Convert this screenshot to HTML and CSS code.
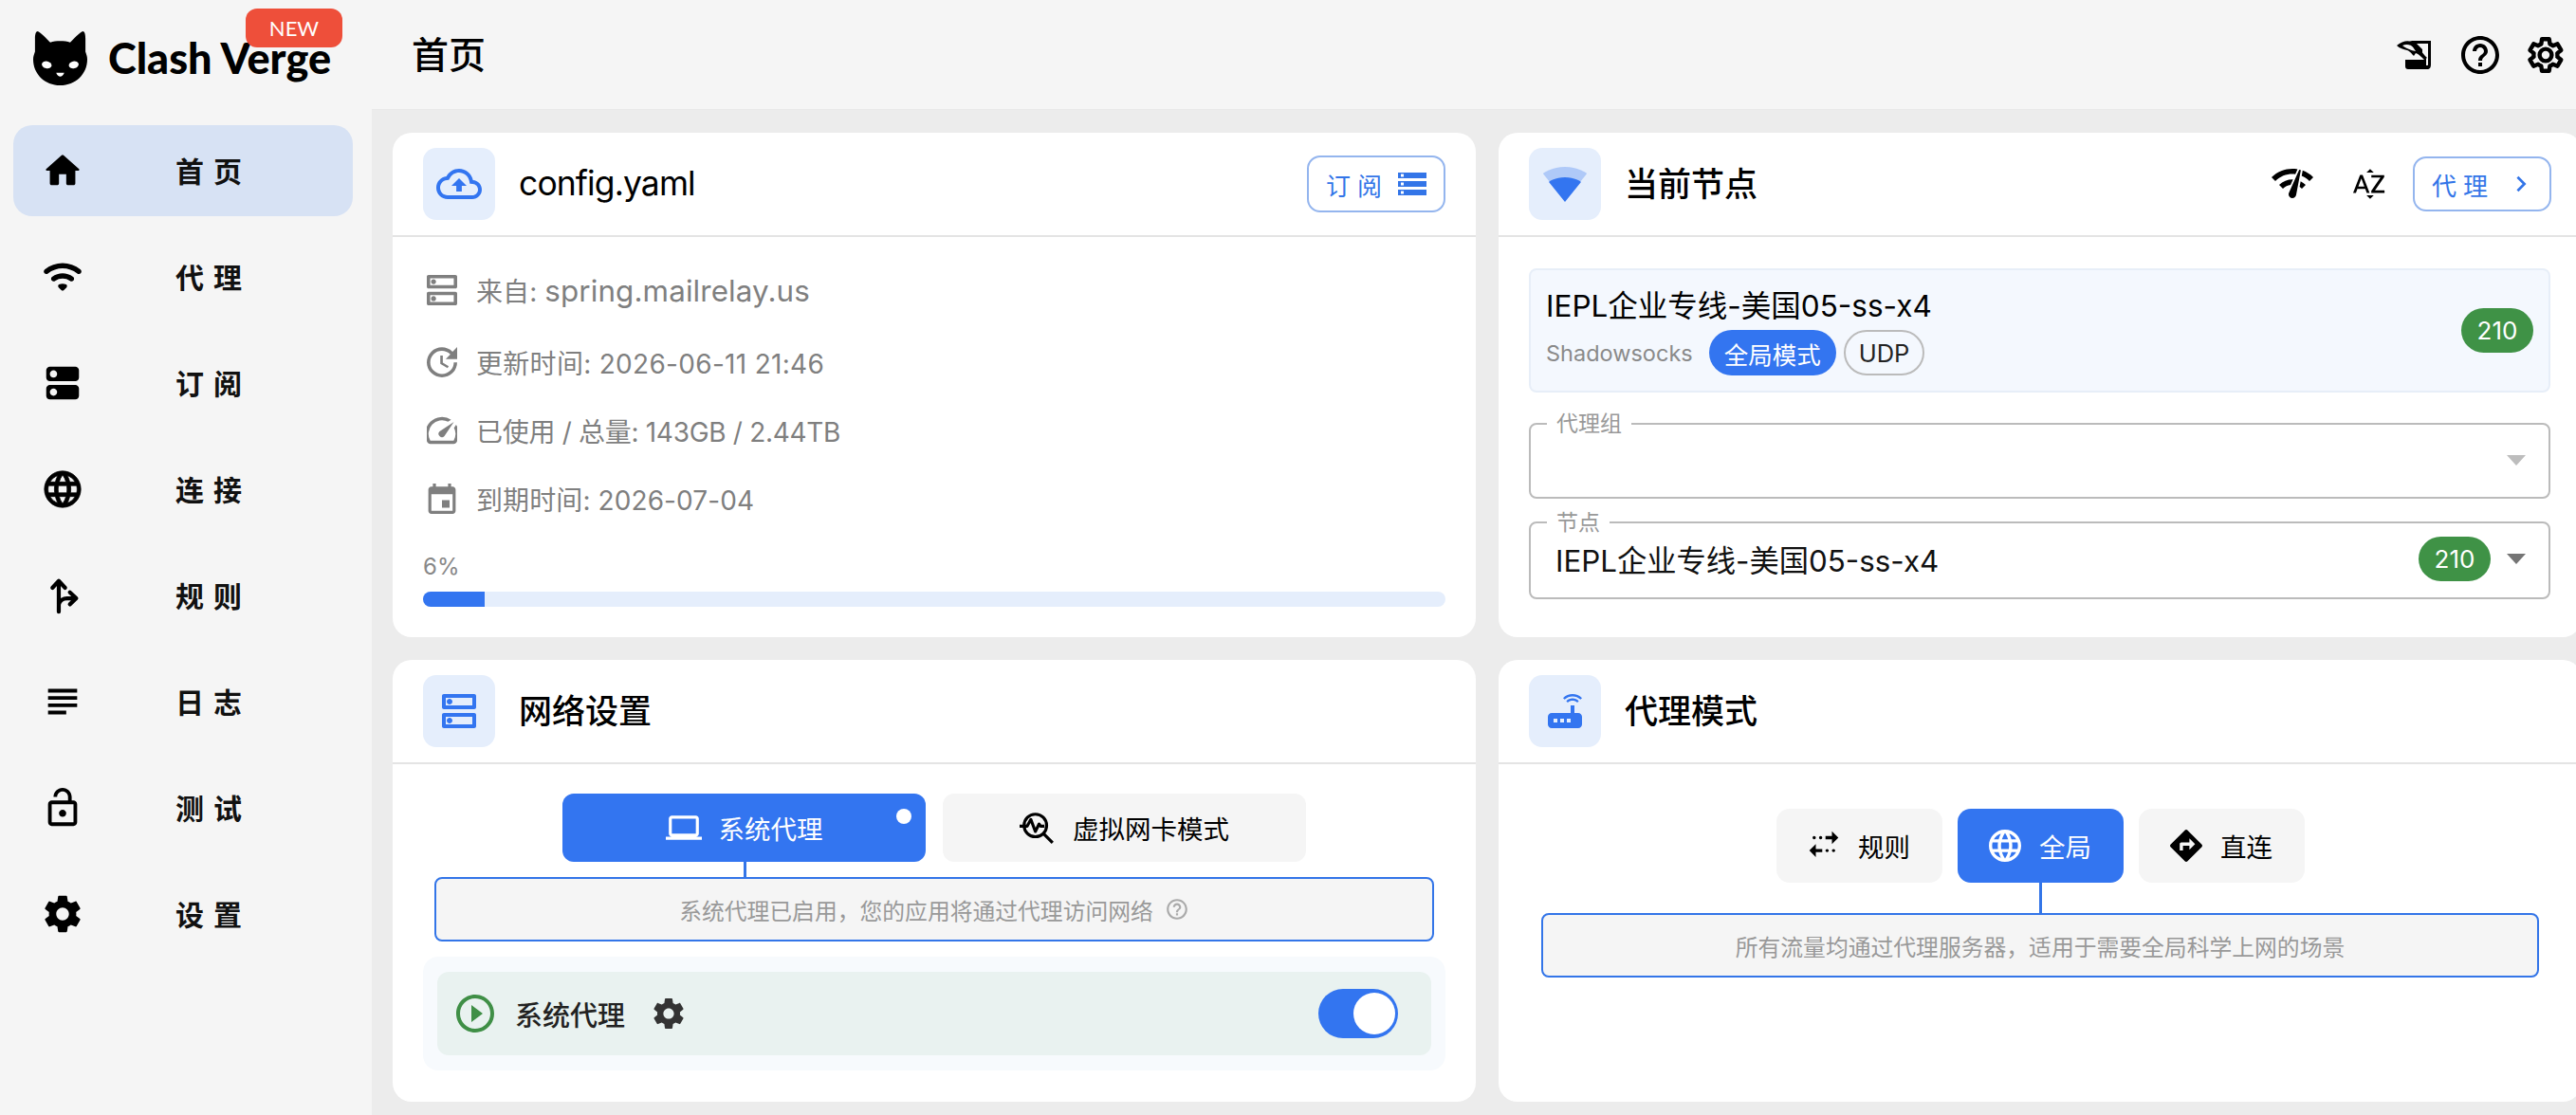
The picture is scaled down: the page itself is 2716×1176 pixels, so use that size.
FILE: index.html
```html
<!DOCTYPE html>
<html lang="zh-CN">
<head>
  <meta charset="UTF-8">
  <title>Clash Verge</title>
  <link rel="stylesheet" href="styles.css">
</head>
<body>

<aside class="sidebar">
  <div class="logo">
    <svg class="logo-cat" viewBox="0 0 60 58" preserveAspectRatio="none">
      <path d="M5 0c2 0 11 9 14 12 3-1 7-1.500 11-1.500s8 .5 11 1.500c3-3 12-12 14-12 2 0 3 3 3 8v14c1 3 2 5 2 8 0 16-13 28-30 28S0 46 0 30c0-3 1-5 2-8V8c0-5 1-8 3-8z" fill="#000"/>
      <ellipse cx="15" cy="36" rx="5.500" ry="3.800" transform="rotate(12 15 36)" fill="#fff"/>
      <ellipse cx="45" cy="36" rx="5.500" ry="3.800" transform="rotate(-12 45 36)" fill="#fff"/>
      <path d="M25.500 44.500h9c-1 2.500-3 4-4.500 4s-3.500-1.500-4.500-4z" fill="#fff"/>
    </svg>
    <span class="logo-text">Clash Verge</span>
    <span class="logo-new">NEW</span>
  </div>

  <nav class="menu">
    <a class="menu-item active">
      <svg viewBox="0 0 24 24"><path d="M10 19v-5h4v5c0 .55.45 1 1 1h3c.55 0 1-.45 1-1v-7h1.700c.46 0 .68-.57.33-.87L12.670 3.600c-.38-.34-.96-.34-1.340 0l-8.360 7.530c-.34.3-.13.87.33.87H5v7c0 .55.45 1 1 1h3c.55 0 1-.45 1-1z"/></svg>
      <span>首页</span>
    </a>
    <a class="menu-item">
      <svg viewBox="0 0 24 24"><path d="M2.060 10.060c.51.51 1.320.56 1.870.1 4.670-3.840 11.450-3.840 16.130-.01.56.46 1.380.42 1.890-.09.59-.59.55-1.570-.1-2.100-5.710-4.670-13.970-4.670-19.690 0-.65.52-.7 1.500-.1 2.100zm7.760 7.760l1.470 1.470c.39.39 1.020.39 1.410 0l1.470-1.470c.47-.47.37-1.280-.23-1.590-1.220-.63-2.680-.63-3.910 0-.57.31-.68 1.120-.21 1.590zm-3.730-3.730c.49.49 1.260.54 1.830.13 2.440-1.730 5.720-1.730 8.160 0 .57.4 1.340.36 1.830-.13l.01-.01c.6-.6.56-1.620-.13-2.110-3.440-2.490-8.130-2.490-11.580 0-.69.5-.73 1.510-.12 2.120z"/></svg>
      <span>代理</span>
    </a>
    <a class="menu-item">
      <svg viewBox="0 0 24 24"><path d="M19 13H5c-1.100 0-2 .9-2 2v4c0 1.100.9 2 2 2h14c1.100 0 2-.9 2-2v-4c0-1.100-.9-2-2-2zM7 19c-1.100 0-2-.9-2-2s.9-2 2-2 2 .9 2 2-.9 2-2 2zM19 3H5c-1.100 0-2 .9-2 2v4c0 1.100.9 2 2 2h14c1.100 0 2-.9 2-2V5c0-1.100-.9-2-2-2zM7 9c-1.100 0-2-.9-2-2s.9-2 2-2 2 .9 2 2-.9 2-2 2z"/></svg>
      <span>订阅</span>
    </a>
    <a class="menu-item">
      <svg viewBox="0 0 24 24"><path d="M11.990 2C6.470 2 2 6.480 2 12s4.470 10 9.990 10C17.520 22 22 17.520 22 12S17.520 2 11.990 2zm6.930 6h-2.950c-.32-1.250-.78-2.450-1.380-3.560 1.840.63 3.370 1.910 4.330 3.560zM12 4.040c.83 1.200 1.480 2.530 1.910 3.960h-3.820c.43-1.430 1.080-2.760 1.910-3.960zM4.260 14C4.100 13.360 4 12.690 4 12s.1-1.360.26-2h3.380c-.08.66-.14 1.320-.14 2 0 .68.06 1.340.14 2H4.260zm.82 2h2.950c.32 1.250.78 2.450 1.380 3.560-1.840-.63-3.370-1.900-4.330-3.560zm2.950-8H5.080c.96-1.660 2.490-2.930 4.330-3.560C8.810 5.550 8.350 6.750 8.030 8zM12 19.960c-.83-1.200-1.480-2.530-1.910-3.960h3.820c-.43 1.430-1.080 2.760-1.910 3.960zM14.340 14H9.660c-.09-.66-.16-1.320-.16-2 0-.68.07-1.350.16-2h4.680c.09.65.16 1.320.16 2 0 .68-.07 1.340-.16 2zm.25 5.560c.6-1.110 1.060-2.310 1.380-3.560h2.950c-.96 1.650-2.490 2.930-4.330 3.560zM16.360 14c.08-.66.14-1.320.14-2 0-.68-.06-1.340-.14-2h3.380c.16.64.26 1.310.26 2s-.1 1.360-.26 2h-3.380z" stroke="#000" stroke-width=".4"/></svg>
      <span>连接</span>
    </a>
    <a class="menu-item">
      <svg viewBox="0 0 24 24"><path class="line" d="M9.900 21V4.500M6.400 7.800 9.900 4l3.500 3.800M9.900 17c.5-2.200 2.500-3.400 4.500-3.400h4.400M16 10.300l3.500 3.300-3.500 3.300"/></svg>
      <span>规则</span>
    </a>
    <a class="menu-item">
      <svg viewBox="0 0 24 24"><path d="M4 5h16v2H4zM4 9h16v2H4zM4 13h16v2H4zM4 17h10v2H4z"/></svg>
      <span>日志</span>
    </a>
    <a class="menu-item">
      <svg viewBox="0 0 24 24"><path d="M12 17c1.100 0 2-.9 2-2s-.9-2-2-2-2 .9-2 2 .9 2 2 2zm6-9h-1V6c0-2.760-2.240-5-5-5S7 3.240 7 6h2c0-1.660 1.340-3 3-3s3 1.340 3 3v2H6c-1.100 0-2 .9-2 2v10c0 1.100.9 2 2 2h12c1.100 0 2-.9 2-2V10c0-1.100-.9-2-2-2zm0 12H6V10h12v10z"/></svg>
      <span>测试</span>
    </a>
    <a class="menu-item">
      <svg viewBox="0 0 24 24"><path d="M19.430 12.980c.04-.32.07-.64.07-.98s-.03-.66-.07-.98l2.110-1.650c.19-.15.24-.42.12-.64l-2-3.460c-.12-.22-.39-.3-.61-.22l-2.490 1c-.52-.4-1.080-.73-1.690-.98l-.38-2.650C14.460 2.180 14.250 2 14 2h-4c-.25 0-.46.18-.49.42l-.38 2.650c-.61.25-1.170.59-1.690.98l-2.490-1c-.23-.09-.49 0-.61.22l-2 3.460c-.13.22-.07.49.12.64l2.110 1.650c-.04.32-.07.65-.07.98s.03.66.07.98l-2.110 1.650c-.19.15-.24.42-.12.64l2 3.460c.12.22.39.3.61.22l2.490-1c.52.4 1.080.73 1.690.98l.38 2.650c.03.24.24.42.49.42h4c.25 0 .46-.18.49-.42l.38-2.650c.61-.25 1.170-.59 1.690-.98l2.490 1c.23.09.49 0 .61-.22l2-3.460c.12-.22.07-.49-.12-.64l-2.110-1.650zM12 15.500c-1.930 0-3.500-1.570-3.500-3.500s1.570-3.500 3.500-3.500 3.500 1.570 3.500 3.500-1.570 3.500-3.500 3.500z"/></svg>
      <span>设置</span>
    </a>
  </nav>
</aside>

<main class="main">
  <header class="topbar">
    <h1>首页</h1>
    <div class="topbar-actions">
      <svg class="top-tun" viewBox="0 0 40 34">
        <path d="M17 2h20v25c0 3-1 5-4 5H13c-2 0-3-1-3-3v-7h20v-5L14 3z" fill="#000"/>
        <path d="M22 5h12v22c0 1-.5 1-1 1h-1v-7l-4-1v-9z" fill="#f5f5f5"/>
        <path d="M1 7c5-4 11-6 15-4 5 2 11 11 17 17l-3 2c-3-3-6-6-9-7l-2 3c-3-3-4-5-7-6-4-1-8-2-11-5z" fill="#000"/>
        <path d="M7 7c3-1.500 6-1.500 9 0 2 1 3 3 5 6-5-1-10-3-14-6z" fill="#f5f5f5"/>
      </svg>
      <svg class="top-icon" viewBox="2 2 20 20"><path d="M11 18h2v-2h-2v2zm1-16C6.480 2 2 6.480 2 12s4.480 10 10 10 10-4.480 10-10S17.520 2 12 2zm0 18c-4.410 0-8-3.590-8-8s3.590-8 8-8 8 3.590 8 8-3.590 8-8 8zm0-14c-2.210 0-4 1.790-4 4h2c0-1.100.9-2 2-2s2 .9 2 2c0 2-3 1.750-3 5h2c0-2.250 3-2.500 3-5 0-2.210-1.790-4-4-4z"/></svg>
      <svg class="top-icon" viewBox="2 2 20 20"><path class="line-thin gear" d="M18.140 12.940c.04-.3.06-.61.06-.94 0-.32-.02-.64-.07-.94l2.030-1.580-1.920-3.320-2.390.96c-.5-.38-1.030-.7-1.620-.94l-.36-2.540h-3.840l-.36 2.540c-.59.24-1.130.57-1.620.94l-2.390-.96-1.920 3.320 2.030 1.580c-.05.3-.09.63-.09.94s.02.64.07.94l-2.030 1.580 1.920 3.320 2.390-.96c.5.38 1.030.7 1.620.94l.36 2.540h3.840l.36-2.540c.59-.24 1.130-.56 1.620-.94l2.390.96 1.920-3.320-2.010-1.580zM12 15.200a3.200 3.200 0 1 1 0-6.400 3.200 3.200 0 0 1 0 6.400z"/></svg>
    </div>
  </header>

  <div class="grid">
    <section class="card card-top">
      <div class="card-head">
        <span class="head-icon">
          <svg viewBox="0 0 24 24"><path d="M19.350 10.040C18.670 6.590 15.640 4 12 4 9.110 4 6.600 5.640 5.350 8.040 2.340 8.360 0 10.910 0 14c0 3.310 2.690 6 6 6h13c2.760 0 5-2.240 5-5 0-2.640-2.050-4.780-4.650-4.960zM19 18H6c-2.210 0-4-1.790-4-4 0-2.050 1.530-3.760 3.560-3.970l1.070-.11.5-.95C8.080 7.140 9.940 6 12 6c2.620 0 4.880 1.860 5.390 4.430l.3 1.500 1.530.11c1.560.1 2.780 1.410 2.780 2.960 0 1.650-1.350 3-3 3zM8 13h2.550v3h2.900v-3H16l-4-4z"/></svg>
        </span>
        <h2>config.yaml</h2>
        <div class="head-actions">
          <button class="outline-btn">订阅
            <svg viewBox="2 4 20 16" class="btn-storage"><path d="M2 20h20v-4H2v4zm2-3h2v2H4v-2zM2 4v4h20V4H2zm4 3H4V5h2v2zm-4 7h20v-4H2v4zm2-3h2v2H4v-2z"/></svg>
          </button>
        </div>
      </div>
      <div class="profile-body">
        <div class="info-row first">
          <svg viewBox="3 3 18 18"><path d="M20 13H4c-.55 0-1 .45-1 1v6c0 .55.45 1 1 1h16c.55 0 1-.45 1-1v-6c0-.55-.45-1-1-1zm-1 6H5v-4h14v4zm-12-.5c.83 0 1.500-.67 1.500-1.500S7.830 15.500 7 15.500s-1.500.67-1.500 1.500.67 1.500 1.500 1.500zM20 3H4c-.55 0-1 .45-1 1v6c0 .55.45 1 1 1h16c.55 0 1-.45 1-1V4c0-.55-.45-1-1-1zm-1 6H5V5h14v4zM7 8.500c.83 0 1.500-.67 1.500-1.500S7.830 5.500 7 5.500 5.500 6.170 5.500 7 6.170 8.500 7 8.500z"/></svg>
          <span>来自: <span class="info-big">spring.mailrelay.us</span></span>
        </div>
        <div class="info-row">
          <svg viewBox="3 3 18 18"><path d="M21 10.120h-6.780l2.740-2.820c-2.730-2.700-7.150-2.800-9.880-.1-2.730 2.710-2.730 7.080 0 9.790s7.150 2.710 9.880 0C18.320 15.650 19 14.080 19 12.100h2c0 1.980-.88 4.550-2.640 6.290-3.510 3.480-9.210 3.480-12.720 0-3.500-3.470-3.530-9.110-.02-12.580s9.140-3.470 12.650 0L21 3v7.120zM12.500 8v4.250l3.500 2.080-.72 1.210L11 13V8h1.500z"/></svg>
          <span class="info-wide">更新时间: 2026-06-11 21:46</span>
        </div>
        <div class="info-row">
          <svg viewBox="3 3 18 18"><path d="M20.380 8.570l-1.230 1.850a8 8 0 0 1-.22 7.580H5.070A8 8 0 0 1 15.580 6.850l1.850-1.230A10 10 0 0 0 3.350 19a2 2 0 0 0 1.720 1h13.850a2 2 0 0 0 1.740-1 10 10 0 0 0-.27-10.440zm-9.790 6.840a2 2 0 0 0 2.830 0l5.660-8.490-8.490 5.660a2 2 0 0 0 0 2.830z"/></svg>
          <span class="info-tight">已使用 / 总量: 143GB / 2.44TB</span>
        </div>
        <div class="info-row">
          <svg viewBox="3 1 18 20"><path d="M17 12h-5v5h5v-5zM16 1v2H8V1H6v2H5c-1.110 0-1.990.9-1.990 2L3 19c0 1.100.89 2 2 2h14c1.100 0 2-.9 2-2V5c0-1.100-.9-2-2-2h-1V1h-2zm3 18H5V8h14v11z"/></svg>
          <span>到期时间: 2026-07-04</span>
        </div>
        <div class="usage-label">6%</div>
        <div class="usage-bar"><div class="usage-fill" style="width: 6%"></div></div>
      </div>
    </section>

    <section class="card card-top">
      <div class="card-head">
        <span class="head-icon">
          <svg viewBox="0 0 24 24"><path d="M12 21 23.600 6.500C23.150 6.150 18.600 3 12 3S.85 6.150.4 6.500z" opacity=".3"/><path d="M3.530 10.950 12 21.500l8.470-10.550C20.040 10.620 17.300 8.500 12 8.500s-8.040 2.120-8.470 2.450z"/></svg>
        </span>
        <h2 class="title-cjk">当前节点</h2>
        <div class="head-actions">
          <svg class="act-check" viewBox="1 4 22 17"><path d="M15.900 5c-.17 0-.32.09-.41.23l-.07.15-5.180 11.650c-.16.29-.26.61-.26.96 0 1.110.9 2.010 2.010 2.010.96 0 1.770-.68 1.960-1.590l.01-.03L16.400 5.500c0-.28-.22-.5-.5-.5zM1 9l2 2c2.880-2.880 6.790-4.080 10.530-3.620l1.190-2.680C9.890 3.840 4.740 5.270 1 9zm20 2 2-2c-1.640-1.640-3.550-2.820-5.590-3.570l-.53 2.820c1.500.62 2.900 1.530 4.120 2.750zm-4 4 2-2c-.8-.8-1.700-1.420-2.660-1.890l-.55 2.920c.42.27.83.59 1.210.97zM5 13l2 2c1.130-1.130 2.560-1.790 4.030-2l1.280-2.880c-2.630-.08-5.300.87-7.310 2.880z"/></svg>
          <svg class="act-sort" viewBox="1 2 22 20"><path d="M14.940 4.660h-4.720l2.360-2.360zm-4.690 14.710h4.660l-2.330 2.330zM6.100 6.270 1.600 17.730h1.840l.92-2.450h5.110l.92 2.450h1.840L7.740 6.270H6.100zm-1.130 7.370 1.940-5.180 1.940 5.180H4.970zm10.760 2.500h6.120v1.590h-8.530v-1.290l5.920-8.560h-5.880v-1.600h8.300v1.260l-5.930 8.600z"/></svg>
          <button class="outline-btn proxy-btn">代理
            <svg class="btn-chevron" viewBox="0 0 12 20"><path d="M2 2l8 8-8 8"/></svg>
          </button>
        </div>
      </div>
      <div class="node-body">
        <div class="node-card">
          <div class="node-info">
            <div class="node-name">IEPL企业专线-美国05-ss-x4</div>
            <div class="node-meta">
              <span class="node-type">Shadowsocks</span>
              <span class="pill pill-blue">全局模式</span>
              <span class="pill pill-line">UDP</span>
            </div>
          </div>
          <span class="delay">210</span>
        </div>
        <fieldset class="select select-empty">
          <legend>代理组</legend>
          <div class="select-row">
            <span class="select-value"></span>
            <span class="select-arrow off"></span>
          </div>
        </fieldset>
        <fieldset class="select select-node">
          <legend>节点</legend>
          <div class="select-row">
            <span class="select-value">IEPL企业专线-美国05-ss-x4</span>
            <span class="delay">210</span>
            <span class="select-arrow"></span>
          </div>
        </fieldset>
      </div>
    </section>

    <section class="card card-bottom">
      <div class="card-head">
        <span class="head-icon">
          <svg viewBox="3 3 18 18" class="head-dns"><path d="M20 13H4c-.55 0-1 .45-1 1v6c0 .55.45 1 1 1h16c.55 0 1-.45 1-1v-6c0-.55-.45-1-1-1zm-1 6H5v-4h14v4zm-12-.5c.83 0 1.500-.67 1.500-1.500S7.830 15.500 7 15.500s-1.500.67-1.500 1.500.67 1.500 1.500 1.500zM20 3H4c-.55 0-1 .45-1 1v6c0 .55.45 1 1 1h16c.55 0 1-.45 1-1V4c0-.55-.45-1-1-1zm-1 6H5V5h14v4zM7 8.500c.83 0 1.500-.67 1.500-1.500S7.830 5.500 7 5.500 5.500 6.170 5.500 7 6.170 8.500 7 8.500z"/></svg>
        </span>
        <h2 class="title-cjk">网络设置</h2>
      </div>
      <div class="net-body">
        <div class="tabs">
          <div class="tab active">
            <svg viewBox="0 0 24 24"><path d="M20 18c1.100 0 1.990-.9 1.990-2L22 6c0-1.100-.9-2-2-2H4c-1.100 0-2 .9-2 2v10c0 1.100.9 2 2 2H0v2h24v-2h-4zM4 6h16v10H4V6z"/></svg>
            系统代理
            <span class="tab-dot"></span>
          </div>
          <div class="tab">
            <svg viewBox="0 0 24 24"><circle class="line-thin" cx="10.500" cy="10.500" r="7.500"/><path class="line-thin" d="m16 16 6 6M0 11h5l2.500-4.500 3 8 2.500-5 1 1.500h2.500"/></svg>
            虚拟网卡模式
          </div>
        </div>
        <div class="desc-box net-desc">系统代理已启用，您的应用将通过代理访问网络
          <svg viewBox="0 0 24 24" class="desc-help"><path d="M11 18h2v-2h-2v2zm1-16C6.480 2 2 6.480 2 12s4.480 10 10 10 10-4.480 10-10S17.520 2 12 2zm0 18c-4.410 0-8-3.590-8-8s3.590-8 8-8 8 3.590 8 8-3.590 8-8 8zm0-14c-2.210 0-4 1.790-4 4h2c0-1.100.9-2 2-2s2 .9 2 2c0 2-3 1.750-3 5h2c0-2.250 3-2.500 3-5 0-2.210-1.790-4-4-4z"/></svg>
        </div>
        <div class="switch-wrap">
          <div class="switch-row">
            <svg class="sw-play" viewBox="2 2 20 20"><path d="M10 16.500l6-4.500-6-4.500v9zM12 2C6.480 2 2 6.480 2 12s4.480 10 10 10 10-4.480 10-10S17.520 2 12 2zm0 18c-4.410 0-8-3.590-8-8s3.590-8 8-8 8 3.590 8 8-3.590 8-8 8z"/></svg>
            <span class="sw-label">系统代理</span>
            <svg class="sw-gear" viewBox="2 2 20 20"><path d="M19.430 12.980c.04-.32.07-.64.07-.98s-.03-.66-.07-.98l2.110-1.650c.19-.15.24-.42.12-.64l-2-3.460c-.12-.22-.39-.3-.61-.22l-2.490 1c-.52-.4-1.080-.73-1.690-.98l-.38-2.650C14.460 2.180 14.250 2 14 2h-4c-.25 0-.46.18-.49.42l-.38 2.650c-.61.25-1.170.59-1.690.98l-2.490-1c-.23-.09-.49 0-.61.22l-2 3.460c-.13.22-.07.49.12.64l2.110 1.650c-.04.32-.07.65-.07.98s.03.66.07.98l-2.110 1.650c-.19.15-.24.42-.12.64l2 3.460c.12.22.39.3.61.22l2.490-1c.52.4 1.080.73 1.690.98l.38 2.650c.03.24.24.42.49.42h4c.25 0 .46-.18.49-.42l.38-2.650c.61-.25 1.170-.59 1.690-.98l2.490 1c.23.09.49 0 .61-.22l2-3.460c.12-.22.07-.49-.12-.64l-2.110-1.650zM12 15.500c-1.930 0-3.500-1.570-3.500-3.500s1.570-3.500 3.500-3.500 3.500 1.570 3.500 3.500-1.570 3.500-3.500 3.500z"/></svg>
            <span class="toggle"><span class="toggle-thumb"></span></span>
          </div>
        </div>
      </div>
    </section>

    <section class="card card-bottom">
      <div class="card-head">
        <span class="head-icon">
          <svg viewBox="0 0 24 24"><path d="M20.200 5.900l.8-.8C19.600 3.700 17.800 3 16 3s-3.600.7-5 2.100l.8.8C13 4.800 14.500 4.200 16 4.200s3 .6 4.200 1.700zm-.9.8c-.9-.9-2.100-1.400-3.300-1.400s-2.400.5-3.300 1.400l.8.8c.7-.7 1.600-1 2.500-1 .9 0 1.800.3 2.500 1l.8-.8zM19 13h-2V9h-2v4H5c-1.100 0-2 .9-2 2v4c0 1.100.9 2 2 2h14c1.100 0 2-.9 2-2v-4c0-1.100-.9-2-2-2zM8 18H6v-2h2v2zm3.500 0h-2v-2h2v2zm3.500 0h-2v-2h2v2z"/></svg>
        </span>
        <h2 class="title-cjk">代理模式</h2>
      </div>
      <div class="mode-body">
        <div class="modes">
          <div class="mode">
            <svg viewBox="2 3 20 20"><path d="M17 4l4 4-4 4V9h-4V7h4V4zm-7 3c-.55 0-1 .45-1 1s.45 1 1 1 1-.45 1-1-.45-1-1-1zM6 7c-.55 0-1 .45-1 1s.45 1 1 1 1-.45 1-1-.45-1-1-1zm1 10h4v-2H7v-3l-4 4 4 4v-3zm7 0c.55 0 1-.45 1-1s-.45-1-1-1-1 .45-1 1 .45 1 1 1zm4 0c.55 0 1-.45 1-1s-.45-1-1-1-1 .45-1 1 .45 1 1 1z"/></svg>
            规则
          </div>
          <div class="mode active">
            <svg viewBox="2 2 20 20"><path d="M11.990 2C6.470 2 2 6.480 2 12s4.470 10 9.990 10C17.520 22 22 17.520 22 12S17.520 2 11.990 2zm6.930 6h-2.950c-.32-1.250-.78-2.450-1.380-3.560 1.840.63 3.370 1.910 4.330 3.560zM12 4.040c.83 1.200 1.480 2.530 1.910 3.960h-3.820c.43-1.430 1.080-2.760 1.910-3.960zM4.260 14C4.100 13.360 4 12.690 4 12s.1-1.360.26-2h3.380c-.08.66-.14 1.320-.14 2 0 .68.06 1.340.14 2H4.260zm.82 2h2.950c.32 1.250.78 2.450 1.380 3.560-1.840-.63-3.370-1.900-4.330-3.560zm2.950-8H5.080c.96-1.660 2.490-2.930 4.330-3.560C8.810 5.550 8.350 6.750 8.030 8zM12 19.960c-.83-1.200-1.480-2.530-1.910-3.960h3.820c-.43 1.430-1.080 2.760-1.910 3.960zM14.340 14H9.660c-.09-.66-.16-1.320-.16-2 0-.68.07-1.350.16-2h4.680c.09.65.16 1.320.16 2 0 .68-.07 1.340-.16 2zm.25 5.560c.6-1.110 1.060-2.310 1.380-3.560h2.950c-.96 1.650-2.490 2.930-4.330 3.560zM16.360 14c.08-.66.14-1.320.14-2 0-.68-.06-1.340-.14-2h3.380c.16.64.26 1.310.26 2s-.1 1.360-.26 2h-3.380z"/></svg>
            全局
          </div>
          <div class="mode">
            <svg viewBox="2 2 20 20"><path d="M21.710 11.290l-9-9c-.39-.39-1.020-.39-1.410 0l-9 9c-.39.39-.39 1.020 0 1.410l9 9c.39.39 1.020.39 1.410 0l9-9c.39-.38.39-1.010 0-1.410zM14 14.500V12h-4v3H8v-4c0-.55.45-1 1-1h5V7.500l3.500 3.500-3.500 3.500z"/></svg>
            直连
          </div>
        </div>
        <div class="desc-box mode-desc">所有流量均通过代理服务器，适用于需要全局科学上网的场景</div>
      </div>
    </section>
  </div>
</main>

</body>
</html>
```

FILE: styles.css
```css
* {
  box-sizing: border-box;
}

html, body {
  height: 100%;
}

body {
  margin: 0;
  display: flex;
  overflow: hidden;
  background-color: #ececec;
  color: #000;
  font-family: "Inter", "Noto Sans CJK SC", sans-serif;
}

svg {
  display: block;
  flex-shrink: 0;
  fill: currentColor;
}

.line {
  fill: none;
  stroke: currentColor;
  stroke-width: 2.2;
  stroke-linecap: round;
  stroke-linejoin: round;
}

.line-thin {
  fill: none;
  stroke: currentColor;
  stroke-width: 2;
  stroke-linejoin: round;
}

.gear {
  stroke-width: 2.2;
}

/* sidebar */
.sidebar {
  width: 392px;
  flex-shrink: 0;
  background-color: #f5f5f5;
}

.logo {
  position: relative;
  height: 132px;
  display: flex;
  align-items: flex-start;
  padding: 33px 0 0 35px;
}

.logo-cat {
  width: 57px;
  height: 57px;
}

.logo-text {
  margin: 1px 0 0 22px;
  font-family: "Lato", sans-serif;
  font-size: 45px;
  font-weight: 900;
  line-height: 54px;
  white-space: nowrap;
}

.logo-new {
  position: absolute;
  left: 259px;
  top: 9px;
  width: 102px;
  height: 41px;
  border-radius: 12px;
  background-color: #ee4f3a;
  color: #fff;
  font-family: "Lato", sans-serif;
  font-size: 22px;
  line-height: 41px;
  text-align: center;
}

.menu {
  padding: 0 20px 0 14px;
}

.menu-item {
  display: flex;
  align-items: center;
  height: 96px;
  margin-bottom: 16px;
  padding-left: 29px;
  border-radius: 20px;
  font-size: 30px;
  font-weight: 700;
  color: #111;
}

.menu-item.active {
  background-color: #d7e2f4;
}

.menu-item svg {
  width: 46px;
  height: 46px;
  margin-right: 96px;
  color: #000;
}

.menu-item span {
  margin-bottom: 2px;
  letter-spacing: 10px;
}

/* top bar */
.main {
  flex: 1;
  min-width: 0;
}

.topbar {
  height: 116px;
  display: flex;
  align-items: center;
  justify-content: space-between;
  padding: 0 12px 0 42px;
  background-color: #f5f5f5;
  border-bottom: 1px solid #e8e8e8;
}

.topbar h1 {
  margin: 0 0 5px;
  font-size: 39px;
  font-weight: 500;
}

.topbar-actions {
  display: flex;
  align-items: center;
}

.top-tun {
  width: 40px;
  height: 34px;
  margin-right: 29px;
}

.top-icon {
  width: 40px;
  height: 40px;
  margin-left: 29px;
}

.top-tun + .top-icon {
  margin-left: 0;
}

/* cards */
.grid {
  display: grid;
  grid-template-columns: 1142px 1142px;
  grid-template-rows: 532px 466px;
  gap: 24px;
  padding: 24px 0 0 22px;
}

.card {
  background-color: #fff;
  border-radius: 20px;
  overflow: hidden;
}

.card-head {
  display: flex;
  align-items: center;
  height: 110px;
  padding: 0 32px;
  border-bottom: 2px solid #e4e4e4;
}

.head-icon {
  width: 76px;
  height: 76px;
  display: flex;
  align-items: center;
  justify-content: center;
  flex-shrink: 0;
  margin-right: 25px;
  border-radius: 14px;
  background-color: #e5eefc;
  color: #3375f0;
}

.head-icon svg {
  width: 48px;
  height: 48px;
}

.head-icon .head-dns {
  width: 36px;
  height: 36px;
}

.card-head h2 {
  margin: 0 0 2px;
  font-size: 35.5px;
  font-weight: 400;
  letter-spacing: -0.9px;
}

.card-head h2.title-cjk {
  margin-bottom: 5px;
  font-size: 35px;
  font-weight: 500;
  letter-spacing: 0;
}

.head-actions {
  display: flex;
  align-items: center;
  margin-left: auto;
}

.outline-btn {
  display: flex;
  align-items: center;
  justify-content: space-between;
  width: 146px;
  height: 60px;
  padding: 0 18px 0 18px;
  border: 2px solid #94b5ee;
  border-radius: 14px;
  background-color: #fff;
  color: #3375e8;
  font-family: inherit;
  font-size: 26px;
  letter-spacing: 7px;
}

.btn-storage {
  width: 30px;
  height: 24px;
}

.proxy-btn {
  width: 146px;
  height: 58px;
  padding-right: 24px;
}

.btn-chevron {
  width: 12px;
  height: 18px;
  fill: none;
  stroke: currentColor;
  stroke-width: 3;
}

.act-check {
  width: 44px;
  height: 34px;
  color: #000;
  margin-right: 41px;
}

.act-sort {
  width: 36px;
  height: 34px;
  color: #000;
  margin-right: 28px;
}

/* profile */
.profile-body {
  padding: 20px 32px 0;
}

.info-row {
  display: flex;
  align-items: center;
  height: 72px;
  font-size: 28px;
  color: #7f7f7f;
}

.info-row.first {
  margin-bottom: 4px;
}

.info-row svg {
  width: 32px;
  height: 32px;
  margin: 0 20px 0 4px;
}

.info-row span {
  letter-spacing: 0.1px;
}

.info-row .info-wide {
  letter-spacing: 0.3px;
}

.info-row .info-tight {
  letter-spacing: -0.3px;
}

.info-row .info-big {
  font-size: 31.4px;
}

.usage-label {
  margin-top: 22px;
  margin-bottom: 12px;
  font-size: 24px;
  line-height: 28px;
  color: #888;
}

.usage-bar {
  height: 16px;
  border-radius: 8px;
  background-color: #e5eefc;
  overflow: hidden;
}

.usage-fill {
  height: 100%;
  background-color: #3375f0;
}

/* current node */
.node-body {
  padding: 33px 33px 0 32px;
}

.node-card {
  display: flex;
  align-items: center;
  justify-content: space-between;
  height: 131px;
  margin-bottom: 20px;
  padding: 0 16px;
  border: 2px solid #e7eef8;
  border-radius: 8px;
  background-color: #f4f8fe;
}

.node-name {
  font-size: 31.5px;
  line-height: 44px;
}

.node-meta {
  display: flex;
  align-items: center;
  margin-top: 3px;
}

.node-type {
  margin-right: 17px;
  font-size: 23.5px;
  color: #8a8a8a;
}

.pill {
  display: inline-flex;
  align-items: center;
  height: 48px;
  padding: 0 16px;
  border-radius: 24px;
  font-size: 25.5px;
}

.pill-blue {
  background-color: #3375f0;
  color: #fff;
  margin-right: 8px;
}

.pill-line {
  border: 2px solid #bbb;
  color: #222;
  padding: 0 14px;
  font-size: 25.5px;
}

.delay {
  display: inline-flex;
  align-items: center;
  justify-content: center;
  width: 76px;
  height: 47px;
  border-radius: 24px;
  background-color: #3f9246;
  color: #fff;
  font-size: 26px;
}

.select {
  margin: 0 0 12px;
  padding: 0;
  min-width: 0;
  border: 2px solid #bbb;
  border-radius: 8px;
}

.select-empty {
  height: 92px;
}

.select-node {
  height: 94px;
}

.select legend {
  margin-left: 17px;
  padding: 0 10px;
  font-size: 23px;
  line-height: 26px;
  color: #999;
}

.select-row {
  display: flex;
  align-items: center;
  height: 50px;
  padding: 0 24px 0 26px;
}

.select-value {
  flex: 1;
  font-size: 31.3px;
  color: #111;
}

.select-arrow {
  width: 0;
  height: 0;
  margin-left: 17px;
  border-left: 10px solid transparent;
  border-right: 10px solid transparent;
  border-top: 11px solid #757575;
}

.select-arrow.off {
  border-top-color: #bdbdbd;
}

/* network settings */
.net-body {
  padding: 31px 32px 0;
}

.tabs {
  display: flex;
  justify-content: center;
  gap: 18px;
}

.tab {
  position: relative;
  width: 383px;
  height: 72px;
  display: flex;
  align-items: center;
  justify-content: center;
  gap: 18px;
  border-radius: 12px;
  background-color: #f5f5f5;
  font-size: 27.5px;
}

.tab svg {
  width: 38px;
  height: 38px;
}

.tab.active {
  background-color: #3375f0;
  color: #fff;
}

.tab.active::after {
  content: "";
  position: absolute;
  left: 50%;
  top: 100%;
  width: 3px;
  height: 16px;
  margin-left: -1px;
  background-color: #3375e8;
}

.tab-dot {
  position: absolute;
  right: 15px;
  top: 16px;
  width: 16px;
  height: 16px;
  border-radius: 50%;
  background-color: #fff;
}

.desc-box {
  display: flex;
  align-items: center;
  justify-content: center;
  height: 68px;
  border: 2px solid #3375e8;
  border-radius: 8px;
  background-color: #f5f5f5;
  font-size: 23.8px;
  color: #999;
}

.net-desc {
  margin: 16px 12px 0;
}

.desc-help {
  width: 26px;
  height: 26px;
  margin-left: 12px;
  color: #aaa;
}

.switch-wrap {
  margin-top: 16px;
  padding: 16px 15px;
  border-radius: 16px;
  background-color: #f7fafd;
}

.switch-row {
  display: flex;
  align-items: center;
  height: 88px;
  padding: 0 35px 0 20px;
  border-radius: 12px;
  background-color: #e9f2f0;
}

.sw-play {
  width: 40px;
  height: 40px;
  color: #3f8f46;
}

.sw-label {
  margin-left: 22px;
  font-size: 29px;
  font-weight: 500;
  color: #222;
}

.sw-gear {
  width: 32px;
  height: 32px;
  margin-left: 30px;
  color: #333;
}

.toggle {
  display: block;
  position: relative;
  width: 84px;
  height: 52px;
  margin-left: auto;
  border-radius: 26px;
  background-color: #3375f0;
}

.toggle-thumb {
  position: absolute;
  right: 3px;
  top: 4px;
  width: 44px;
  height: 44px;
  border-radius: 50%;
  background-color: #fff;
}

/* proxy mode */
.mode-body {
  padding: 47px 32px 0;
}

.modes {
  display: flex;
  justify-content: center;
  gap: 16px;
}

.mode {
  position: relative;
  width: 175px;
  height: 78px;
  display: flex;
  align-items: center;
  justify-content: center;
  gap: 19px;
  border-radius: 14px;
  background-color: #f5f5f5;
  font-size: 27.5px;
}

.mode svg {
  width: 34px;
  height: 34px;
}

.mode.active {
  background-color: #3375f0;
  color: #fff;
}

.mode.active::after {
  content: "";
  position: absolute;
  left: 50%;
  top: 100%;
  width: 3px;
  height: 32px;
  margin-left: -1px;
  background-color: #3375e8;
}

.mode-desc {
  margin: 32px 13px 0;
}
```
